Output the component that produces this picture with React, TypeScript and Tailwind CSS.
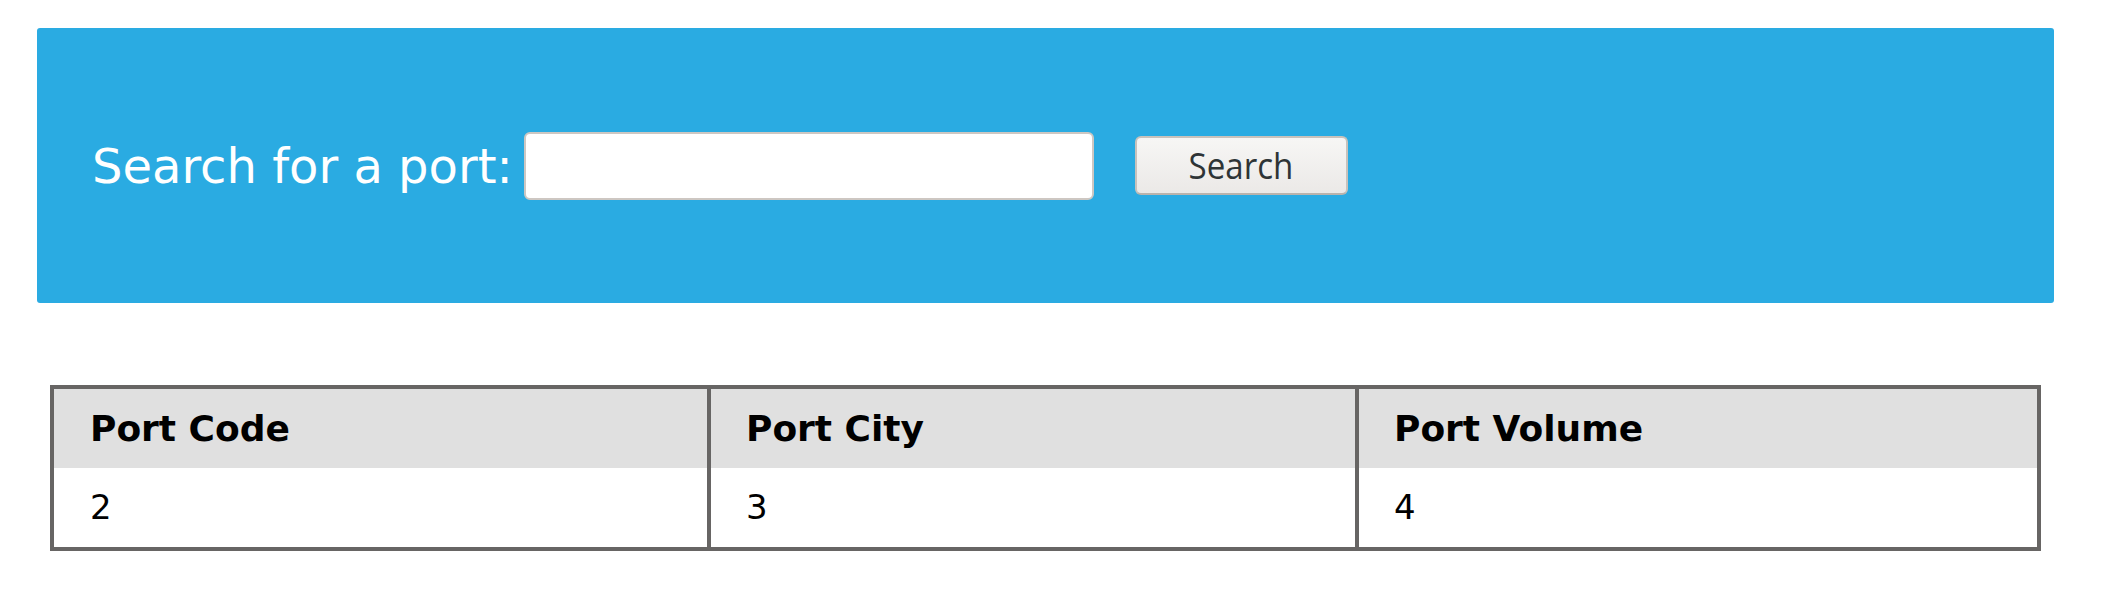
import React from 'react'

const rows = [{ code: '2', city: '3', volume: '4' }]

export default function App() {
  return (
    <div className="min-h-screen bg-white font-['DejaVu_Sans',sans-serif]">
      <div className="pt-[28px] pl-[37px]">
        <section className="flex h-[275px] w-[2017px] items-center rounded-[3px] bg-[#2aabe2] pl-[55px]">
          <label htmlFor="port" className="text-[48px] leading-none text-white">
            Search for a port:
          </label>
          <input
            id="port"
            type="text"
            className="ml-[11px] h-[68px] w-[570px] rounded-[6px] border-2 border-[#cdc7c2] bg-white px-3 text-[30px] outline-none"
          />
          <button
            type="button"
            className="ml-[41px] flex h-[59px] w-[213px] items-center justify-center rounded-[6px] border-2 border-[#c8c2bc] border-b-[#b9b3ad] bg-gradient-to-b from-[#f7f6f5] to-[#ebe9e7] font-['Open_Sans',sans-serif] text-[36px] text-[#2e3436]"
          >
            <span className="inline-block scale-x-[0.92]">Search</span>
          </button>
        </section>
      </div>

      <div className="mt-[82px] ml-[50px] w-[1991px] border-4 border-[#676564]">
        <div className="grid grid-cols-[653px_648px_682px] bg-[#e0e0e0] text-[36px] font-bold text-black">
          <div className="flex h-[79px] items-center pl-[36px]">Port Code</div>
          <div className="flex h-[79px] items-center border-l-4 border-[#676564] pl-[35px]">Port City</div>
          <div className="flex h-[79px] items-center border-l-4 border-[#676564] pl-[35px]">Port Volume</div>
        </div>
        {rows.map((r) => (
          <div key={r.code} className="grid grid-cols-[653px_648px_682px] bg-white text-[34px] text-black">
            <div className="flex h-[79px] items-center pl-[36px]">{r.code}</div>
            <div className="flex h-[79px] items-center border-l-4 border-[#676564] pl-[35px]">{r.city}</div>
            <div className="flex h-[79px] items-center border-l-4 border-[#676564] pl-[35px]">{r.volume}</div>
          </div>
        ))}
      </div>
    </div>
  )
}
